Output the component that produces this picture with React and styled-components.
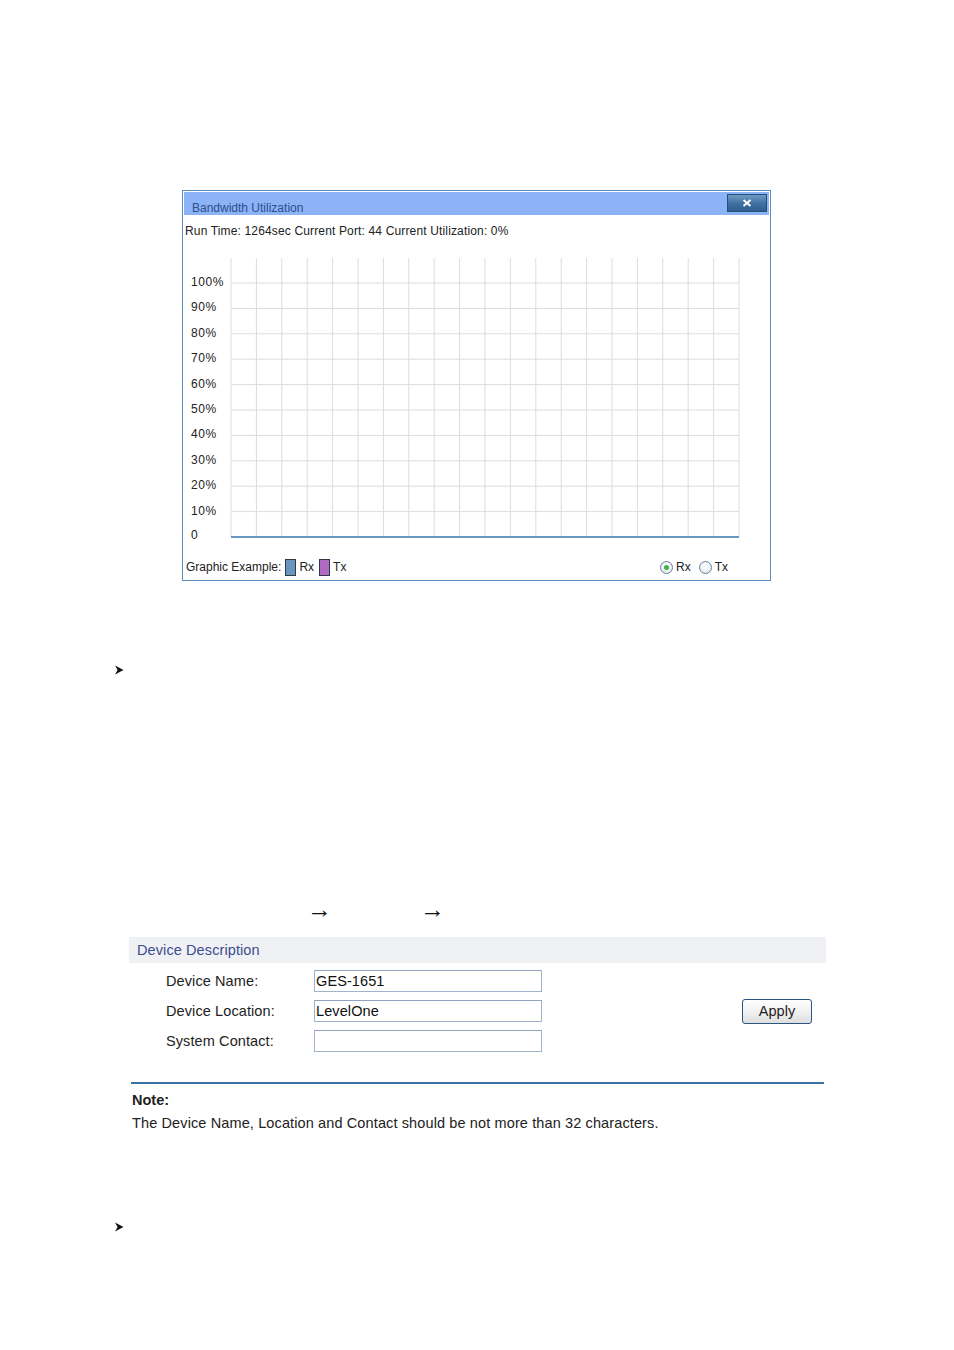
import React from "react"
import styled, { createGlobalStyle } from "styled-components"

const GlobalStyle = createGlobalStyle`
  html, body {
    margin: 0;
    padding: 0;
    background: #fff;
  }
  body {
    font-family: "Liberation Sans", Arial, sans-serif;
    color: #222;
  }
`

const Page = styled.div`
  width: 954px;
  height: 1350px;
  padding-top: 190px;
  box-sizing: border-box;
  overflow: hidden;
`

const Window = styled.div`
  margin-left: 182px;
  width: 589px;
  height: 391px;
  box-sizing: border-box;
  border: 1px solid #5a8dbd;
  padding: 1px 1px 0;
  display: flex;
  flex-direction: column;
  font-size: 12px;
`

const TitleBar = styled.div`
  height: 23px;
  background: #8cb3f6;
  display: flex;
  align-items: flex-end;
  justify-content: space-between;
  padding: 0 2px 0 8px;
`

const Title = styled.span`
  color: #2c4d8e;
  font-size: 12px;
  line-height: 17px;
  margin-bottom: -2px;
`

const CloseButton = styled.div`
  width: 38px;
  height: 16px;
  margin-bottom: 3px;
  border: 1px solid #234f78;
  background: linear-gradient(#6e9bc4, #3d6f9f 55%, #2e5f8f);
  display: flex;
  align-items: center;
  justify-content: center;
`

const RunTime = styled.div`
  height: 30px;
  line-height: 30px;
  padding-left: 1px;
  margin-top: 1px;
  letter-spacing: 0.15px;
`

const Chart = styled.svg`
  display: block;
`

const Footer = styled.div`
  flex: 1;
  display: flex;
  align-items: center;
  justify-content: space-between;
  padding: 8px 41px 0 2px;
`

const Legend = styled.div`
  display: flex;
  align-items: center;
`

const Swatch = styled.span`
  display: inline-block;
  width: 9px;
  height: 15px;
  border: 1px solid #2e3a48;
  background: ${(p) => p.color};
  margin: 0 3px 0 ${(p) => p.gap}px;
`

const Radios = styled.div`
  display: flex;
  align-items: center;
`

const Radio = styled.span`
  width: 11px;
  height: 11px;
  border-radius: 50%;
  border: 1px solid #6b7f98;
  background: radial-gradient(circle at 50% 35%, #fff, #dde3ea);
  display: inline-flex;
  align-items: center;
  justify-content: center;
  margin: 0 3px 0 ${(p) => p.gap}px;

  &::after {
    content: "";
    width: 5px;
    height: 5px;
    border-radius: 50%;
    background: ${(p) => (p.checked ? "#3fb24a" : "transparent")};
  }
`

const Bullet = styled.svg`
  display: block;
  margin-left: 115px;
  margin-top: ${(p) => p.top}px;
`

const ArrowRow = styled.div`
  display: flex;
  margin-top: 225px;
  padding-left: 307px;
  font-family: "Liberation Serif", "DejaVu Serif", serif;
  font-size: 25px;
  line-height: 20px;
  height: 20px;
  color: #111;
`

const Arrow = styled.span`
  width: 113px;
`

const Panel = styled.div`
  margin: 17px 0 0 129px;
  width: 697px;
  font-size: 14.5px;
  letter-spacing: 0.1px;
`

const PanelHead = styled.div`
  height: 26px;
  line-height: 27px;
  background: #f0f1f5;
  color: #3d4d8c;
  padding-left: 8px;
`

const Form = styled.div`
  display: flex;
  align-items: center;
  justify-content: space-between;
  padding: 7px 14px 0 37px;
`

const Fields = styled.div`
  display: grid;
  grid-template-columns: 148px 228px;
  row-gap: 8px;
`

const Label = styled.label`
  line-height: 22px;
  color: #222;
`

const Input = styled.div`
  height: 22px;
  box-sizing: border-box;
  border: 1px solid #a0b3cc;
  border-top-color: #8fa3bd;
  padding-left: 1px;
  line-height: 20px;
  color: #111;
`

const ApplyButton = styled.button`
  width: 70px;
  height: 25px;
  border: 1px solid #2b5583;
  border-radius: 3px;
  background: linear-gradient(#ffffff, #f1f1f1 50%, #dedede);
  font-family: "Liberation Sans", Arial, sans-serif;
  font-size: 14.5px;
  color: #222;
  padding: 0;
`

const Divider = styled.div`
  margin: 30px 0 0 131px;
  width: 693px;
  height: 2px;
  background: #3a72a6;
`

const Note = styled.div`
  margin-left: 132px;
  margin-top: 5px;
  font-size: 14.5px;
  letter-spacing: 0.12px;
  line-height: 23px;
  color: #222;
`

const NoteTitle = styled.div`
  font-weight: bold;
  letter-spacing: 0;
`

const rows = ["100%", "90%", "80%", "70%", "60%", "50%", "40%", "30%", "20%", "10%"]
const gridLeft = 47
const gridRight = 555
const gridTop = 12
const firstLine = 37
const step = 25.4
const baseY = firstLine + step * 10

const BandwidthChart = () => {
  const cols = []
  for (let i = 0; i <= 20; i++) cols.push(gridLeft + ((gridRight - gridLeft) / 20) * i)
  return (
    <Chart width="587" height="300" viewBox="0 0 587 300">
      {cols.map((x, i) => (
        <line key={"v" + i} x1={x} y1={gridTop} x2={x} y2={baseY} stroke="#dcdcdc" strokeWidth="1" />
      ))}
      {rows.map((r, i) => (
        <line
          key={"h" + i}
          x1={gridLeft}
          y1={firstLine + step * i}
          x2={gridRight}
          y2={firstLine + step * i}
          stroke="#dcdcdc"
          strokeWidth="1"
        />
      ))}
      <line x1={gridLeft} y1={baseY} x2={gridRight} y2={baseY} stroke="#6b96c1" strokeWidth="2" />
      {rows.map((r, i) => (
        <text
          key={"t" + i}
          x="7"
          y={firstLine + step * i + 3}
          fontSize="12"
          fontFamily="Liberation Sans, Arial, sans-serif"
          letterSpacing="0.6"
          fill="#222"
        >
          {r}
        </text>
      ))}
      <text x="7" y={baseY + 2} fontSize="12" fontFamily="Liberation Sans, Arial, sans-serif" fill="#222">
        0
      </text>
    </Chart>
  )
}

const BulletIcon = ({ top }) => (
  <Bullet top={top} width="9" height="10" viewBox="0 0 9 10">
    <polygon points="0,0.5 8.5,5 0,9.5 2.6,5" fill="#111" />
  </Bullet>
)

const App = () => (
  <>
    <GlobalStyle />
    <Page>
      <Window>
        <TitleBar>
          <Title>Bandwidth Utilization</Title>
          <CloseButton>
            <svg width="10" height="8" viewBox="0 0 10 8">
              <path d="M1.5 1 L8.5 7 M8.5 1 L1.5 7" stroke="#fff" strokeWidth="2" />
            </svg>
          </CloseButton>
        </TitleBar>
        <RunTime>Run Time: 1264sec Current Port: 44 Current Utilization: 0%</RunTime>
        <BandwidthChart />
        <Footer>
          <Legend>
            Graphic Example:
            <Swatch color="#6a94be" gap={4} />
            Rx
            <Swatch color="#b06ac4" gap={5} />
            Tx
          </Legend>
          <Radios>
            <Radio checked gap={0} />
            Rx
            <Radio gap={8} />
            Tx
          </Radios>
        </Footer>
      </Window>

      <BulletIcon top={84} />

      <ArrowRow>
        <Arrow>→</Arrow>
        <Arrow>→</Arrow>
      </ArrowRow>

      <Panel>
        <PanelHead>Device Description</PanelHead>
        <Form>
          <Fields>
            <Label>Device Name:</Label>
            <Input>GES-1651</Input>
            <Label>Device Location:</Label>
            <Input>LevelOne</Input>
            <Label>System Contact:</Label>
            <Input />
          </Fields>
          <ApplyButton>Apply</ApplyButton>
        </Form>
      </Panel>

      <Divider />
      <Note>
        <NoteTitle>Note:</NoteTitle>
        The Device Name, Location and Contact should be not more than 32 characters.
      </Note>

      <BulletIcon top={87} />
    </Page>
  </>
)

export default App
